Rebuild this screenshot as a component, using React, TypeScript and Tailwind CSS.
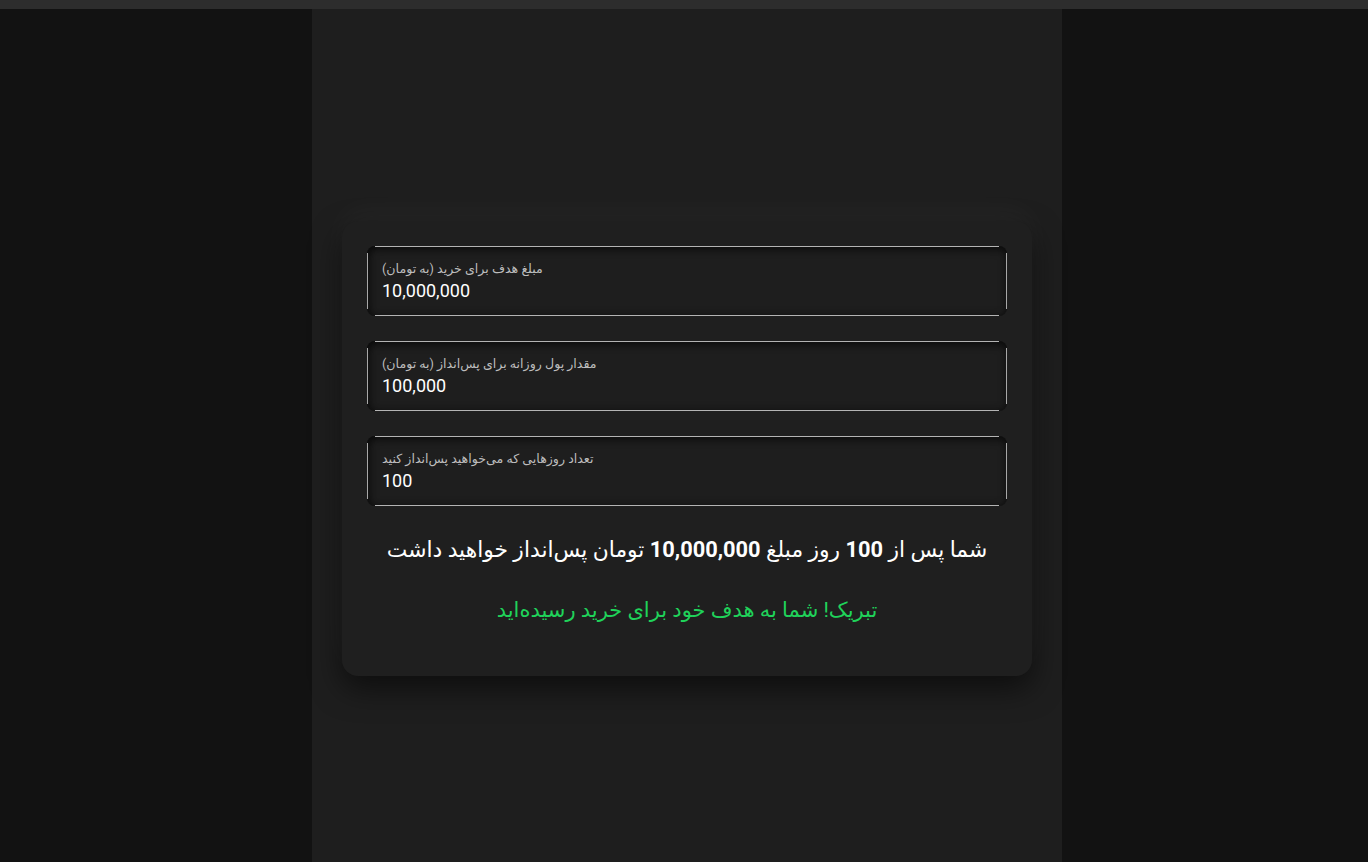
import React from 'react';

const font = { fontFamily: 'Roboto, "DejaVu Sans", sans-serif' };

function Field({ label, value }: { label: string; value: string }) {
  return (
    <div className="flex h-[70px] rounded-[8px] bg-[#1e1e1e] shadow-[inset_0_3px_8px_rgba(0,0,0,0.55),inset_3px_0_8px_rgba(0,0,0,0.35)]">
      <div className="my-[7px] w-px bg-[#a8a8a8]" />
      <div className="flex flex-1 flex-col">
        <div className="mx-[7px] h-px bg-[#b4b4b4]" />
        <div className="flex flex-1 flex-col justify-center px-[14px]">
          <div className="text-left text-[12.6px] leading-[16px] text-[#bdbdbd]">
            <span dir="rtl">{label}</span>
          </div>
          <div className="mt-[3px] text-left text-[18px] leading-[22px] text-white" dir="ltr">
            {value}
          </div>
        </div>
        <div className="mx-[7px] h-px bg-[#b4b4b4]" />
      </div>
      <div className="my-[7px] w-px bg-[#a8a8a8]" />
    </div>
  );
}

export default function App() {
  return (
    <div className="flex min-h-[862px] flex-col bg-[#121212]" style={font}>
      <div className="h-[9px] bg-[#2d2d2d]" />
      <div className="flex flex-1 justify-center pl-[6px]">
        <div className="flex w-[750px] flex-col items-center bg-[#1e1e1e] pt-[212px]">
          <div className="flex w-[690px] flex-col gap-[25px] rounded-[16px] bg-[#1f1f1f] px-[25px] pt-[25px] pb-[47px] shadow-[0_-12px_30px_rgba(255,255,255,0.035),0_12px_30px_rgba(0,0,0,0.55)]">
            <Field label="مبلغ هدف برای خرید (به تومان)" value="10,000,000" />
            <Field label="مقدار پول روزانه برای پس‌انداز (به تومان)" value="100,000" />
            <Field label="تعداد روزهایی که می‌خواهید پس‌انداز کنید" value="100" />
            <div className="flex flex-col items-center" dir="rtl">
              <p className="text-[21.8px] leading-[38px] text-white">
                شما پس از <b>100</b> روز مبلغ <b>10,000,000</b> تومان پس‌انداز خواهید داشت
              </p>
              <p className="mt-[22px] text-[21px] leading-[38px] text-[#1fd35a]">
                تبریک! شما به هدف خود برای خرید رسیده‌اید
              </p>
            </div>
          </div>
        </div>
      </div>
    </div>
  );
}
